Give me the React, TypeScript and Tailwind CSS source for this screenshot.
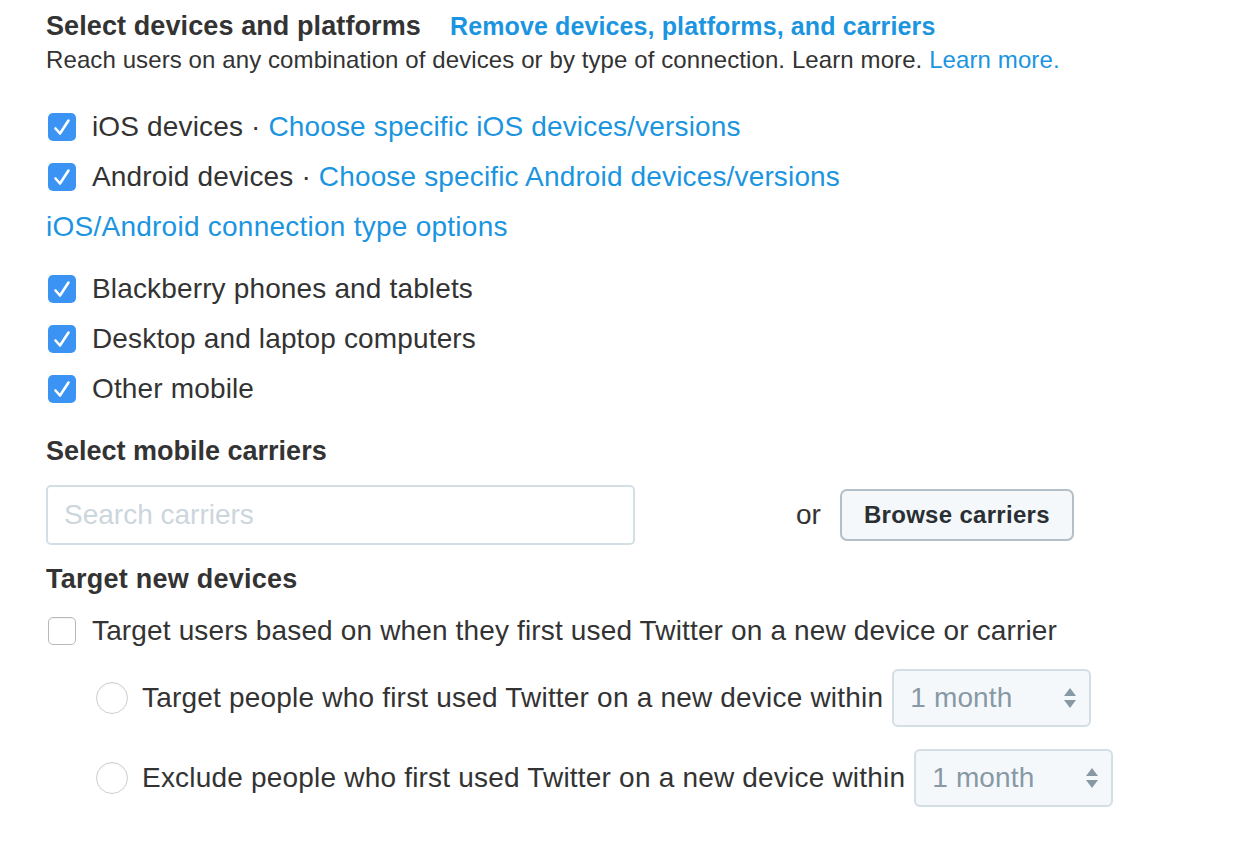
import React from "react";

const font = { fontFamily: '"Liberation Sans", Arial, Helvetica, sans-serif' };

function Check({ checked }: { checked: boolean }) {
  if (checked) {
    return (
      <div className="w-[28px] h-[28px] rounded-[5px] bg-[#3b94f4] flex items-center justify-center shrink-0">
        <svg width="28" height="28" viewBox="0 0 28 28">
          <path d="M7.5 15.5 L12 20.5 L20.5 7.5" fill="none" stroke="white" strokeWidth="2.6" strokeLinecap="round" strokeLinejoin="round" />
        </svg>
      </div>
    );
  }
  return <div className="w-[28px] h-[28px] rounded-[5px] border border-[#b8b8b8] bg-white shrink-0 shadow-[inset_0_1px_1px_rgba(0,0,0,0.05)]" />;
}

function CheckRow({ label, link }: { label: string; link?: string }) {
  return (
    <div className="h-[50px] flex items-center">
      <div className="ml-[2px]">
        <Check checked />
      </div>
      <span className="ml-[16px] text-[28px] leading-[32px] tracking-[0.15px] text-[#333] whitespace-nowrap">
        {label}
        {link && (
          <>
            {" · "}
            <span className="text-[#1b95e0]">{link}</span>
          </>
        )}
      </span>
    </div>
  );
}

function Select() {
  return (
    <div className="ml-[9px] h-[58px] w-[199px] rounded-[6px] border-2 border-[#d4dee5] bg-[#f5f8fa] flex items-center justify-between pl-[16px] pr-[12px] shrink-0">
      <span className="text-[28px] leading-[32px] tracking-[0.15px] text-[#8899a6]">1 month</span>
      <svg width="14" height="28" viewBox="0 0 14 28">
        <path d="M1 12 L7 4 L13 12 Z" fill="#8899a6" />
        <path d="M1 16 L7 24 L13 16 Z" fill="#8899a6" />
      </svg>
    </div>
  );
}

function Radio() {
  return <div className="w-[32px] h-[32px] rounded-full border border-[#cfcfcf] bg-white shrink-0 shadow-[inset_0_1px_2px_rgba(0,0,0,0.04)]" />;
}

export default function App() {
  return (
    <div className="w-[1256px] h-[858px] bg-white pl-[46px] overflow-hidden" style={font}>
      <div className="flex flex-col">
        <div className="mt-[10px] h-[32px] flex items-center whitespace-nowrap">
          <span className="text-[27px] leading-[32px] tracking-[0.1px] font-bold text-[#333]">Select devices and platforms</span>
          <span className="ml-[29px] text-[25px] leading-[32px] tracking-[0.12px] font-bold text-[#1b95e0]">Remove devices, platforms, and carriers</span>
        </div>
        <div className="mt-[2px] h-[32px] flex items-center text-[24px] leading-[32px] tracking-[0.1px] text-[#333] whitespace-nowrap">
          <span>
            Reach users on any combination of devices or by type of connection. Learn more.{" "}
            <span className="text-[#1b95e0]">Learn more.</span>
          </span>
        </div>

        <div className="mt-[26px]">
          <CheckRow label="iOS devices" link="Choose specific iOS devices/versions" />
          <CheckRow label="Android devices" link="Choose specific Android devices/versions" />
          <div className="h-[50px] flex items-center text-[28px] leading-[32px] tracking-[0.25px] text-[#1b95e0]">iOS/Android connection type options</div>
        </div>

        <div className="mt-[12px]">
          <CheckRow label="Blackberry phones and tablets" />
          <CheckRow label="Desktop and laptop computers" />
          <CheckRow label="Other mobile" />
        </div>

        <div className="mt-[21px] h-[32px] flex items-center text-[27px] leading-[32px] font-bold text-[#333]">Select mobile carriers</div>

        <div className="mt-[18px] flex items-center">
          <div className="w-[589px] h-[60px] rounded-[5px] border-2 border-[#d4dee5] bg-white flex items-center pl-[16px] shrink-0">
            <span className="text-[28px] leading-[32px] text-[#ccd6dd]">Search carriers</span>
          </div>
          <span className="ml-[161px] text-[28px] leading-[32px] text-[#333]">or</span>
          <div className="ml-[19px] w-[234px] h-[52px] rounded-[7px] border-2 border-[#b3c0ca] bg-[#f5f8fa] flex items-center justify-center shrink-0">
            <span className="text-[24px] leading-[32px] tracking-[0.3px] font-bold text-[#292f33]">Browse carriers</span>
          </div>
        </div>

        <div className="mt-[18px] h-[32px] flex items-center text-[27px] leading-[32px] tracking-[0.25px] font-bold text-[#333]">Target new devices</div>

        <div className="mt-[11px] h-[50px] flex items-center">
          <div className="ml-[2px]">
            <Check checked={false} />
          </div>
          <span className="ml-[16px] text-[28px] leading-[32px] tracking-[0.15px] text-[#333] whitespace-nowrap">Target users based on when they first used Twitter on a new device or carrier</span>
        </div>

        <div className="mt-[13px] flex items-center pl-[50px]">
          <Radio />
          <span className="ml-[14px] text-[28px] leading-[32px] tracking-[0.2px] text-[#333] whitespace-nowrap">Target people who first used Twitter on a new device within</span>
          <Select />
        </div>
        <div className="mt-[22px] flex items-center pl-[50px]">
          <Radio />
          <span className="ml-[14px] text-[28px] leading-[32px] tracking-[0.2px] text-[#333] whitespace-nowrap">Exclude people who first used Twitter on a new device within</span>
          <Select />
        </div>
      </div>
    </div>
  );
}
